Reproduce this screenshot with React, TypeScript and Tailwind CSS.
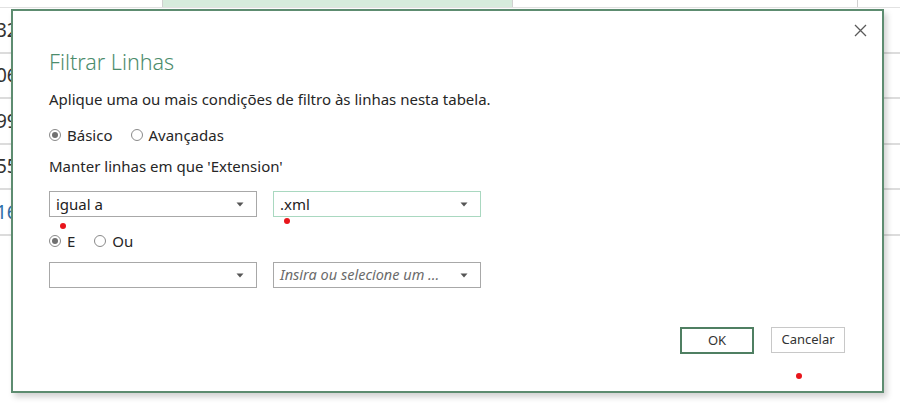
import type { ReactNode } from "react";

const FONT = { fontFamily: '"Noto Sans", "Open Sans", sans-serif' };

// numbers peeking out on the left of the sheet behind the dialog
const ROWS = [
  { value: "32", tone: "text-[#333]" },
  { value: "06", tone: "text-[#333]" },
  { value: "99", tone: "text-[#333]" },
  { value: "55", tone: "text-[#333]" },
  { value: "16", tone: "text-[#2f6ea8]" },
];

function SheetBackdrop() {
  return (
    <div className="flex flex-col">
      <div className="flex h-[8px] border-b border-[#e2e2e2]">
        <div className="w-[163px] border-r border-[#d0d0d0]" />
        <div className="w-[350px] border-r border-[#d0d0d0] bg-[#d6ebdc]" />
        <div className="w-[345px] border-r border-[#d0d0d0]" />
        <div className="flex-1" />
      </div>
      {ROWS.map((r) => (
        <div
          key={r.value}
          className="flex h-[45.6px] items-center border-b-2 border-[#dcdcdc]"
        >
          <span className={`-ml-[4px] text-[19px] ${r.tone}`}>{r.value}</span>
        </div>
      ))}
    </div>
  );
}

function Radio({ checked, children }: { checked?: boolean; children: ReactNode }) {
  return (
    <label className="flex items-center gap-[6px]">
      <span className="flex h-[12px] w-[12px] items-center justify-center rounded-full border border-[#8a8a8a] bg-white">
        {checked && <span className="h-[6px] w-[6px] rounded-full bg-[#707070]" />}
      </span>
      <span>{children}</span>
    </label>
  );
}

function Caret() {
  return (
    <svg width="8" height="5" viewBox="0 0 8 5" className="shrink-0">
      <path d="M0.5 0.5 L7.5 0.5 L4 4.5 Z" fill="#555" />
    </svg>
  );
}

function Select({
  value,
  placeholder,
  focused,
}: {
  value?: string;
  placeholder?: string;
  focused?: boolean;
}) {
  return (
    <div
      className={`flex h-[26px] w-[208px] items-center justify-between border pl-[6px] pr-[12px] ${
        focused ? "border-[#a9d8c0]" : "border-[#a8a8a8]"
      }`}
    >
      {value ? (
        <span className="text-[15px] text-[#222]">{value}</span>
      ) : (
        <span className="text-[14.5px] italic text-[#6b6b6b]">{placeholder}</span>
      )}
      <Caret />
    </div>
  );
}

function Dot({ className }: { className: string }) {
  return <span className={`absolute h-[6px] w-[6px] rounded-full bg-[#e8151b] ${className}`} />;
}

function FilterRowsDialog() {
  return (
    <div className="absolute left-[11px] top-[9px] h-[384px] w-[873px] border-2 border-[#5d8c70] bg-white text-[#262626] shadow-[3px_4px_6px_rgba(0,0,0,0.18)]">
      <button className="absolute right-[13px] top-[11px] p-[2px]">
        <svg width="13" height="13" viewBox="0 0 13 13">
          <path d="M1 1 L12 12 M12 1 L1 12" stroke="#5a5a5a" strokeWidth="1.3" />
        </svg>
      </button>

      <div className="flex h-full flex-col pl-[36px] pr-[37px] text-[15px]">
        <h1 className="mt-[37px] text-[21.5px] font-light leading-[28px] text-[#4c8c6c]">
          Filtrar Linhas
        </h1>
        <p className="mt-[13px] leading-[20px]">
          Aplique uma ou mais condições de filtro às linhas nesta tabela.
        </p>
        <div className="mt-[16px] flex h-[20px] items-center gap-[18px]">
          <Radio checked>Básico</Radio>
          <Radio>Avançadas</Radio>
        </div>
        <p className="mt-[11px] leading-[20px]">Manter linhas em que 'Extension'</p>

        <div className="mt-[15px] flex gap-[16px]">
          <Select value="igual a" />
          <Select value=".xml" focused />
        </div>
        <div className="mt-[14px] flex h-[20px] items-center gap-[19px]">
          <Radio checked>E</Radio>
          <Radio>Ou</Radio>
        </div>
        <div className="mt-[11px] flex gap-[16px]">
          <Select value="" placeholder="" />
          <Select placeholder="Insira ou selecione um ..." />
        </div>

        <div className="mt-[39px] flex justify-end gap-[17px] text-[13px]">
          <button className="h-[27px] w-[74px] border-2 border-[#4f7f62] text-[#333]">
            OK
          </button>
          <button className="h-[26px] w-[74px] border border-[#c8c8c8] text-[#333]">
            Cancelar
          </button>
        </div>
      </div>
    </div>
  );
}

export default function App() {
  return (
    <div className="relative h-[411px] w-[900px] overflow-hidden bg-white" style={FONT}>
      <SheetBackdrop />
      <FilterRowsDialog />
      <Dot className="left-[60px] top-[223px]" />
      <Dot className="left-[284px] top-[218px]" />
      <Dot className="left-[796px] top-[373px]" />
    </div>
  );
}
